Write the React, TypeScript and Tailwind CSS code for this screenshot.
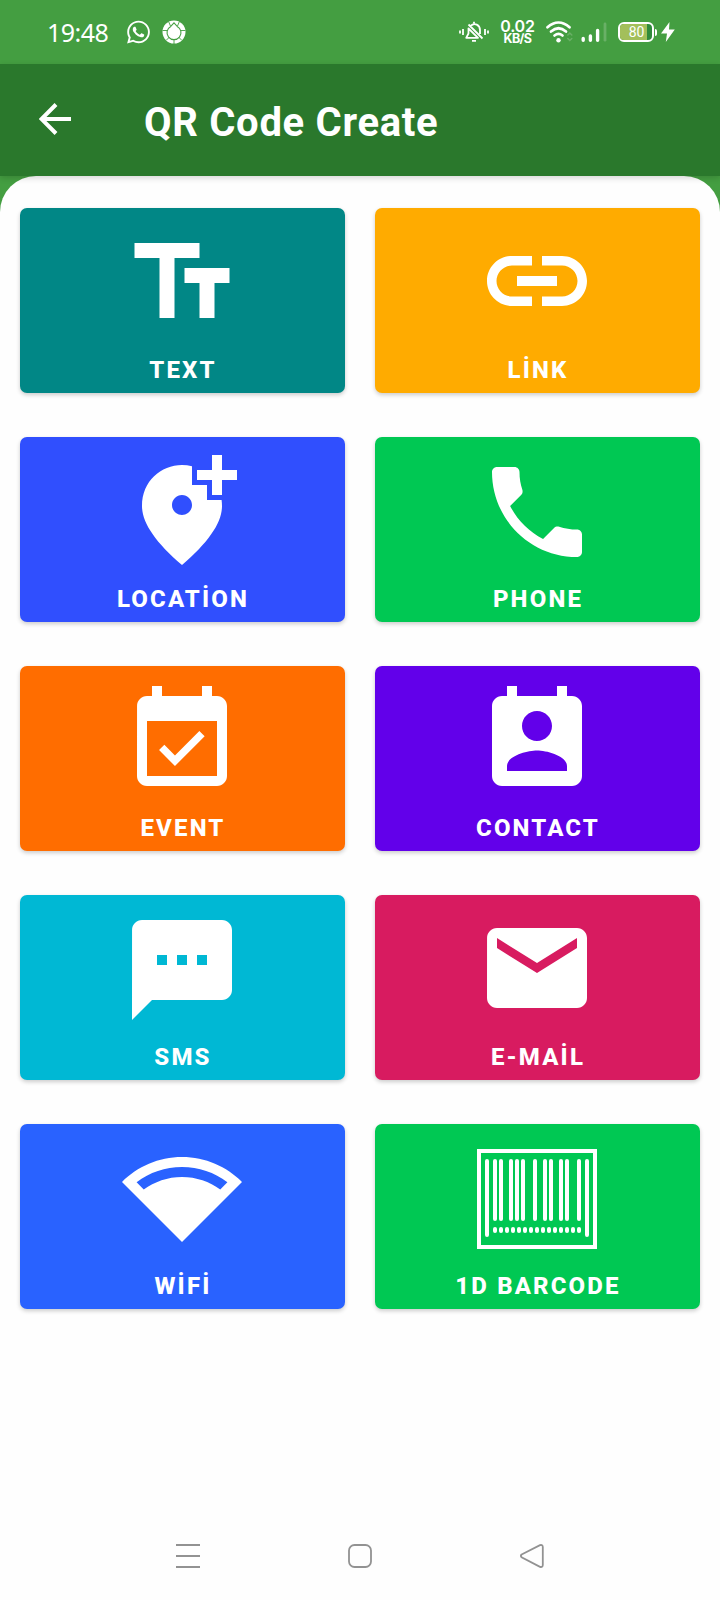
import type { ReactNode } from "react";
import { FaWhatsapp } from "react-icons/fa";

const barcodeBars = [18, 24, 34, 40, 46, 58, 68, 74, 84, 90, 102];
const barcodeDots = Array.from({ length: 15 }, (_, i) => 18 + i * 6);

function Glyph({ d }: { d: string }) {
  return (
    <svg viewBox="0 0 24 24" className="h-[120px] w-[120px] fill-white" fillRule="evenodd">
      <path d={d} />
    </svg>
  );
}

function Barcode() {
  return (
    <svg viewBox="0 0 120 100" className="h-[100px] w-[120px]" fill="none" stroke="#fff" strokeWidth="4" strokeLinecap="round">
      <rect x="2" y="2" width="116" height="96" strokeLinecap="butt" />
      {barcodeBars.map((x) => (
        <path key={x} d={`M${x} 12V70`} />
      ))}
      <path d="M10 12V86M110 12V86" />
      {barcodeDots.map((x) => (
        <path key={x} d={`M${x} 80V82`} />
      ))}
    </svg>
  );
}

type Tile = { label: string; color: string; pad: string; icon: ReactNode };

const tiles: Tile[] = [
  {
    label: "TEXT",
    color: "bg-[#018786]",
    pad: "pt-[15px]",
    icon: <Glyph d="M2.5 4v3h5v12h3V7h5V4h-13zm19 5h-9v3h3v7h3v-7h3V9z" />,
  },
  {
    label: "LİNK",
    color: "bg-[#ffab00]",
    pad: "pt-[13px]",
    icon: (
      <Glyph d="M3.9 12c0-1.71 1.39-3.1 3.1-3.1h4V7H7c-2.76 0-5 2.24-5 5s2.24 5 5 5h4v-1.9H7c-1.71 0-3.1-1.39-3.1-3.1zM8 13h8v-2H8v2zm9-6h-4v1.9h4c1.71 0 3.1 1.39 3.1 3.1s-1.39 3.1-3.1 3.1h-4V17h4c2.76 0 5-2.24 5-5s-2.24-5-5-5z" />
    ),
  },
  {
    label: "LOCATİON",
    color: "bg-[#304ffe]",
    pad: "pt-[13px]",
    icon: (
      <Glyph d="M20 1v3h3v2h-3v3h-2V6h-3V4h3V1h2zM12 13c1.1 0 2-.9 2-2s-.9-2-2-2-2 .9-2 2 .9 2 2 2zm2-9.75V7h3v3h2.92c.05.39.08.79.08 1.2 0 3.32-2.67 7.25-8 11.8-5.33-4.55-8-8.48-8-11.8C4 6.22 7.8 3 12 3c.68 0 1.35.08 2 .25z" />
    ),
  },
  {
    label: "PHONE",
    color: "bg-[#00c853]",
    pad: "pt-[15px]",
    icon: (
      <Glyph d="M6.62 10.79c1.44 2.83 3.76 5.14 6.59 6.59l2.2-2.2c.27-.27.67-.36 1.02-.24 1.12.37 2.33.57 3.57.57.55 0 1 .45 1 1V20c0 .55-.45 1-1 1-9.39 0-17-7.61-17-17 0-.55.45-1 1-1h3.5c.55 0 1 .45 1 1 0 1.25.2 2.45.57 3.57.11.35.03.74-.25 1.02l-2.2 2.2z" />
    ),
  },
  {
    label: "EVENT",
    color: "bg-[#ff6d00]",
    pad: "pt-[15px]",
    icon: (
      <Glyph d="M16.53 11.06L15.47 10l-4.88 4.88-2.12-2.12-1.06 1.06L10.59 17l5.94-5.94zM19 3h-1V1h-2v2H8V1H6v2H5c-1.11 0-1.99.9-1.99 2L3 19c0 1.1.89 2 2 2h14c1.1 0 2-.9 2-2V5c0-1.1-.9-2-2-2zm0 16H5V8h14v11z" />
    ),
  },
  {
    label: "CONTACT",
    color: "bg-[#6200ea]",
    pad: "pt-[15px]",
    icon: (
      <Glyph d="M19 3h-1V1h-2v2H8V1H6v2H5c-1.11 0-2 .9-2 2v14c0 1.1.89 2 2 2h14c1.1 0 2-.9 2-2V5c0-1.1-.9-2-2-2zm-7 3c1.66 0 3 1.34 3 3s-1.34 3-3 3-3-1.34-3-3 1.34-3 3-3zm6 12H6v-1c0-2 4-3.1 6-3.1s6 1.1 6 3.1v1z" />
    ),
  },
  {
    label: "SMS",
    color: "bg-[#00b8d4]",
    pad: "pt-[15px]",
    icon: (
      <Glyph d="M20 2H4c-1.1 0-1.99.9-1.99 2L2 22l4-4h14c1.1 0 2-.9 2-2V4c0-1.1-.9-2-2-2zM9 11H7V9h2v2zm4 0h-2V9h2v2zm4 0h-2V9h2v2z" />
    ),
  },
  {
    label: "E-MAİL",
    color: "bg-[#d81b60]",
    pad: "pt-[13px]",
    icon: (
      <Glyph d="M20 4H4c-1.1 0-1.99.9-1.99 2L2 18c0 1.1.9 2 2 2h16c1.1 0 2-.9 2-2V6c0-1.1-.9-2-2-2zm0 4l-8 5-8-5V6l8 5 8-5v2z" />
    ),
  },
  {
    label: "WİFİ",
    color: "bg-[#2962ff]",
    pad: "pt-[13px]",
    icon: (
      <Glyph d="M12 4C7.31 4 3.07 5.9 0 8.98L12 21 24 8.98C20.93 5.9 16.69 4 12 4zM2.92 9.07C5.51 7.08 8.67 6 12 6s6.49 1.08 9.08 3.07l-1.43 1.43C17.5 8.94 14.86 8 12 8s-5.5.94-7.65 2.51z" />
    ),
  },
  { label: "1D BARCODE", color: "bg-[#00c853]", pad: "pt-[25px]", icon: <Barcode /> },
];

function TileCard({ tile }: { tile: Tile }) {
  return (
    <button
      className={`flex h-[185px] flex-col items-center justify-between rounded-[7px] pr-px pb-[8px] shadow-[0_2px_4px_rgba(0,0,0,0.2)] ${tile.color} ${tile.pad}`}
    >
      {tile.icon}
      <span className="-mt-4 pl-[2px] text-[24px] leading-[30px] font-extrabold tracking-[2.15px] text-white">{tile.label}</span>
    </button>
  );
}

function StatusBar() {
  return (
    <div className="flex h-16 items-center bg-[#449e41] pl-[47px] text-white">
      <span className="w-[79px] font-['Noto_Sans',sans-serif] text-[25px] leading-8 tracking-[-0.5px]">19:48</span>
      <FaWhatsapp className="h-[26px] w-[25px]" />
      <svg viewBox="0 0 24 24" className="ml-[11px] h-6 w-6">
        <circle cx="12" cy="12" r="11.5" fill="#fff" />
        <g fill="none" stroke="#449e41" strokeWidth="1.100">
          <path d="M12 2.800l3.200 3.600a7 7 0 1 1-6.400 0z" />
          <path d="M5 10.500H.5M19 10.500h4.500M7 17.500l-3 3M17 17.500l3 3M12 20v4M8.500 6L6.800 2M15.500 6l1.700-4" strokeWidth=".9" />
        </g>
      </svg>
      <svg viewBox="0 0 32 24" className="ml-[272px] h-6 w-8" fill="none" stroke="#fff" strokeWidth="1.800">
        <path d="M2 10.500v3M5 9v6M27 9v6M30 10.500v3" />
        <path d="M12.500 6c4-4 9.500-1 9.500 4v4M10.500 4.500L24.500 18.500M10.500 8.500v5l-2.300 4.300H20z" strokeLinejoin="round" />
        <path d="M16 1.800v2M14 20.800h4" />
      </svg>
      <div className="ml-[10px] flex w-[35px] flex-col items-center font-['Inter',sans-serif]">
        <span className="text-[16px] leading-[13px] font-semibold tracking-[-0.2px]">0.02</span>
        <span className="text-[12.5px] leading-[12px] font-bold tracking-[-0.6px]">KB/S</span>
      </div>
      <svg viewBox="0 0 28 24" className="ml-[10px] h-6 w-7" fill="none" strokeLinecap="round">
        <g stroke="#fff" strokeWidth="2.700">
          <path d="M2.500 7.300C9.500 1 17.500 1 24.500 7.300" />
          <path d="M6 11.500C11 7.200 16 7.200 21 11.500" />
          <path d="M9.500 15.500C12.500 13.200 14.500 13.200 17.500 15.500" />
        </g>
        <circle cx="13.500" cy="20.300" r="2.200" fill="#fff" />
        <path d="M22.800 15l2-2 2 2M22.800 18.500l2 2 2-2" stroke="#69b066" strokeWidth="1.500" />
      </svg>
      <svg viewBox="0 0 26 20" className="ml-[8px] h-5 w-[26px]" strokeWidth="3.400" stroke="#fff" strokeLinecap="round">
        <path d="M2.200 16.500V18.200M9.400 14V18.200M16.600 8.500V18.200" />
        <path d="M24 2V18.200" stroke="#69b066" strokeWidth="2.800" />
      </svg>
      <div className="ml-[11px] flex h-[20px] w-[36px] items-center rounded-[6px] border-2 border-white bg-[#2f8a3b]">
        <div className="flex h-full w-[27px] items-center justify-center rounded-l-[4px] bg-[#a3bf5b] pl-[6px] font-['Roboto',sans-serif] text-[14px] leading-4">
          80
        </div>
      </div>
      <div className="ml-px h-[7px] w-[2px] rounded-r bg-white" />
      <svg viewBox="0 0 14 20" className="ml-[4px] h-5 w-[14px] fill-white">
        <path d="M8.500 0L0 11.500h6L4.800 20 13.800 7.500H8z" />
      </svg>
    </div>
  );
}

export default function App() {
  return (
    <div className="flex h-[1600px] w-[720px] flex-col bg-[#449e41] font-['Roboto',sans-serif]">
      <StatusBar />
      <header className="z-10 flex h-28 items-center bg-[#2a782c] shadow-[0_2px_6px_rgba(0,0,0,0.16)]">
        <svg viewBox="0 0 32 32" className="-mt-[2px] ml-[39px] h-8 w-8" fill="none" stroke="#fff" strokeWidth="4">
          <path d="M32 16H3M17 1.500L2.500 16 17 30.500" />
        </svg>
        <h1 className="mt-[6px] ml-[73px] text-[40px] leading-[48px] font-bold tracking-[0.7px] text-white">QR Code Create</h1>
      </header>
      <main className="flex flex-1 flex-col rounded-t-[36px] bg-[#fefefe] px-5 pt-8">
        <div className="grid grid-cols-2 gap-x-[30px] gap-y-[44px]">
          {tiles.map((tile) => (
            <TileCard key={tile.label} tile={tile} />
          ))}
        </div>
        <nav className="mt-auto mb-8 flex items-center justify-between px-[156px]">
          <svg viewBox="0 0 24 24" className="h-6 w-6" stroke="#929292" strokeWidth="2">
            <path d="M0 1h24M0 12h24M0 23h24" />
          </svg>
          <svg viewBox="0 0 24 24" className="h-6 w-6" fill="none" stroke="#929292" strokeWidth="1.800">
            <rect x="1" y="1" width="22" height="22" rx="5.500" />
          </svg>
          <svg viewBox="0 0 24 24" className="h-6 w-6" fill="none" stroke="#929292" strokeWidth="1.800">
            <path d="M1.600 10.500L20 1.200q2.700-.8 2.800 1.800v18q-.1 2.600-2.800 1.800L1.600 13.300q-1.400-1.400 0-2.800z" />
          </svg>
        </nav>
      </main>
    </div>
  );
}
